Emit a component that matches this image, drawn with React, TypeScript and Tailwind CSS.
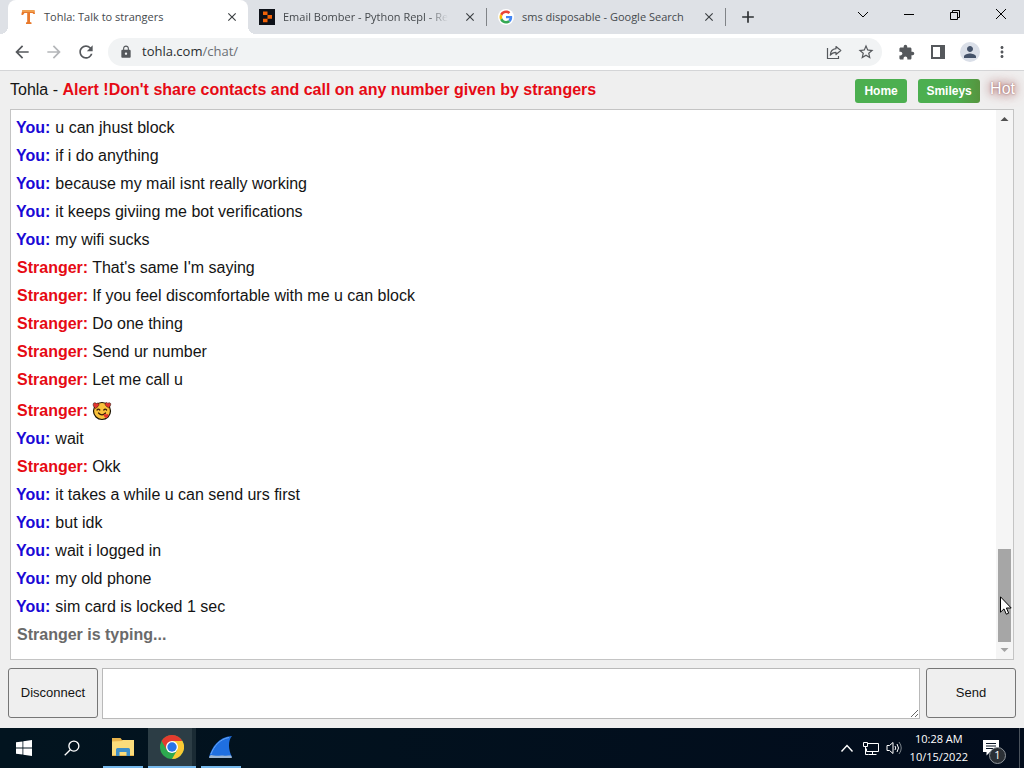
import type { ReactNode } from 'react'
import {
    MdArrowBack,
    MdArrowForward,
    MdRefresh,
    MdLock,
    MdStarBorder,
    MdExtension,
    MdPerson,
    MdMoreVert,
    MdClose,
    MdAdd,
} from 'react-icons/md'

interface Message {
    from: 'You' | 'Stranger'
    text?: string
}

interface TabProps {
    title: string
    icon: ReactNode
    active?: boolean
    faded?: boolean
}

const messages: Message[] = [
    { from: 'You', text: 'u can jhust block' },
    { from: 'You', text: 'if i do anything' },
    { from: 'You', text: 'because my mail isnt really working' },
    { from: 'You', text: 'it keeps giviing me bot verifications' },
    { from: 'You', text: 'my wifi sucks' },
    { from: 'Stranger', text: "That's same I'm saying" },
    { from: 'Stranger', text: 'If you feel discomfortable with me u can block' },
    { from: 'Stranger', text: 'Do one thing' },
    { from: 'Stranger', text: 'Send ur number' },
    { from: 'Stranger', text: 'Let me call u' },
    { from: 'Stranger' },
    { from: 'You', text: 'wait' },
    { from: 'Stranger', text: 'Okk' },
    { from: 'You', text: 'it takes a while u can send urs first' },
    { from: 'You', text: 'but idk' },
    { from: 'You', text: 'wait i logged in' },
    { from: 'You', text: 'my old phone' },
    { from: 'You', text: 'sim card is locked 1 sec' },
]

function TohlaIcon() {
    return (
        <svg width="16" height="16" viewBox="0 0 16 16">
            <path d="M1.500 4.500 2.500 1h11.800L15 5h-1.500L12.500 4H10v9l1.500.6V15H6v-1.400l1.200-.6V4H4.500L3 6H1.500z" fill="#e8792b" />
            <path d="M1.800 3 2.500 1h11.800l.3 2z" fill="#f0a050" />
        </svg>
    )
}

function ReplitIcon() {
    return (
        <svg width="16" height="16" viewBox="0 0 16 16">
            <path d="M0 0h16v16H0z" fill="#0e1118" />
            <path d="M4 2.500h4.500V6H4zM8.500 6H13v3.800H8.500zM4 9.800h4.500v3.500H4z" fill="#f26207" />
        </svg>
    )
}

function GoogleIcon() {
    return (
        <svg width="16" height="16" viewBox="0 0 48 48">
            <circle cx="24" cy="24" r="24" fill="#fff" />
            <g transform="translate(4.500 4.500) scale(.81)">
                <path fill="#EA4335" d="M24 9.500c3.540 0 6.710 1.220 9.210 3.600l6.850-6.850C35.900 2.380 30.470 0 24 0 14.620 0 6.510 5.380 2.560 13.220l7.980 6.190C12.430 13.720 17.740 9.500 24 9.500z" />
                <path fill="#4285F4" d="M46.980 24.550c0-1.570-.15-3.090-.38-4.550H24v9.020h12.940c-.58 2.960-2.260 5.480-4.780 7.180l7.730 6c4.510-4.180 7.090-10.360 7.090-17.650z" />
                <path fill="#FBBC05" d="M10.530 28.590c-.48-1.450-.76-2.990-.76-4.590s.27-3.140.76-4.590l-7.980-6.190C.92 16.460 0 20.120 0 24c0 3.880.92 7.540 2.560 10.780l7.970-6.190z" />
                <path fill="#34A853" d="M24 48c6.480 0 11.930-2.130 15.890-5.810l-7.730-6c-2.150 1.450-4.920 2.300-8.160 2.300-6.260 0-11.570-4.220-13.470-9.910l-7.980 6.190C6.510 42.620 14.620 48 24 48z" />
            </g>
        </svg>
    )
}

function LoveEmoji() {
    return (
        <svg width="20" height="20" viewBox="0 0 20 20" role="img" aria-label="smiling face with hearts">
            <circle cx="10" cy="10" r="8.500" fill="#f9c23c" stroke="#1a1205" strokeWidth="1.200" />
            <path d="M5 9q1.400-1.800 2.800 0M11.800 9q1.400-1.800 2.800 0M6.500 12q3.500 3.600 7 0" fill="none" stroke="#3a1d08" strokeWidth="1.300" strokeLinecap="round" />
            <path d="M3.500 7.500C1.500 6 .5 4 1.500 2.200 2.500 1.200 4 1.700 4.300 2.700 5 1.700 6.800 1.900 7 3.200 7.200 4.700 5.500 6.200 3.500 7.500z" fill="#e3342f" stroke="#1a1205" strokeWidth=".5" />
            <path d="M16.700 6.800c-2.700-1.300-4.200-3-3.500-4.500.8-1.200 2.200-.9 2.700.1.700-1 2.400-.9 2.800.3.300 1.500-.9 3.200-2 4.100z" fill="#e3342f" stroke="#1a1205" strokeWidth=".5" />
            <path d="M14.500 17c-2-.8-3.200-2-2.800-3.300.5-1 1.800-1 2.300-.1.700-.9 2.100-.6 2.400.4.200 1.200-.8 2.300-1.900 3z" fill="#e3342f" />
        </svg>
    )
}

function Tab({ title, icon, active, faded }: TabProps) {
    return (
        <div
            className={
                active
                    ? 'relative flex w-60 items-center rounded-t-lg bg-white pr-2 pl-3'
                    : 'flex w-[238px] items-center pr-2 pl-[11px]'
            }
        >
            {active && (
                <>
                    <span className="absolute bottom-0 -left-2 h-2 w-2 bg-[radial-gradient(circle_at_top_left,transparent_8px,#fff_8px)]" />
                    <span className="absolute -right-2 bottom-0 h-2 w-2 bg-[radial-gradient(circle_at_top_right,transparent_8px,#fff_8px)]" />
                </>
            )}
            {icon}
            <span className="ml-2 flex-1 text-[11px] whitespace-nowrap text-[#45494d]">
                <span className={faded ? 'mask-r-from-88%' : ''}>{title}</span>
            </span>
            <button aria-label="Close tab" className="ml-1 flex w-4 justify-center text-[#3c4043]">
                <MdClose size={14} />
            </button>
        </div>
    )
}

function TabStrip() {
    return (
        <div className="flex h-[34px] bg-[#dee1e6] pl-2">
            <Tab title="Tohla: Talk to strangers" icon={<TohlaIcon />} active />
            <Tab title="Email Bomber - Python Repl - Re" icon={<ReplitIcon />} faded />
            <span className="my-2 w-px bg-[#808387]" />
            <Tab title="sms disposable - Google Search" icon={<GoogleIcon />} />
            <span className="my-2 w-px bg-[#808387]" />
            <button aria-label="New tab" className="ml-3 text-[#2d3033]">
                <MdAdd size={20} />
            </button>
            <div className="ml-auto flex text-black">
                <button aria-label="Search tabs" className="flex w-[46px] justify-center pt-[9px]">
                    <svg width="12" height="12" viewBox="0 0 12 12" fill="none" stroke="currentColor">
                        <path d="m1 3 5 5 5-5" />
                    </svg>
                </button>
                <button aria-label="Minimize" className="flex w-[46px] justify-center pt-[9px]">
                    <svg width="12" height="12" viewBox="0 0 12 12" fill="none" stroke="currentColor">
                        <path d="M1 5.500h10" />
                    </svg>
                </button>
                <button aria-label="Restore" className="flex w-[46px] justify-center pt-[9px]">
                    <svg width="12" height="12" viewBox="0 0 12 12" fill="none" stroke="currentColor">
                        <path d="M1.500 3.500h7v7h-7zM3.500 3.500v-2h7v7h-2" />
                    </svg>
                </button>
                <button aria-label="Close" className="flex w-[46px] justify-center pt-[9px]">
                    <svg width="12" height="12" viewBox="0 0 12 12" fill="none" stroke="currentColor">
                        <path d="m1 0 10 10M11 0 1 10" />
                    </svg>
                </button>
            </div>
        </div>
    )
}

function Toolbar() {
    return (
        <div className="flex h-[37px] items-center border-b border-[#d4d5d7] bg-white pl-3 text-[#55585c]">
            <button aria-label="Back" className="mr-3"><MdArrowBack size={20} /></button>
            <button aria-label="Forward" className="mr-3 text-[#b4b6b9]"><MdArrowForward size={20} /></button>
            <button aria-label="Reload" className="mr-3"><MdRefresh size={20} /></button>
            <div className="flex h-7 flex-1 items-center rounded-full bg-[#f1f3f4] pr-[7px] pl-[11px]">
                <MdLock size={14} />
                <a href="#" className="ml-[9px] flex-1 text-[13px] text-[#6b6f74]">
                    <span className="text-[#2a2d30]">tohla.com</span>/chat/
                </a>
                <button aria-label="Share" className="mr-[15px]">
                    <svg width="16" height="16" viewBox="0 0 16 16" fill="none" stroke="currentColor" strokeWidth="1.200">
                        <path d="M1.500 4v10.500h11V12" />
                        <path d="M10 2.500 14.800 6.500 10 10.500V8.300c-2.500 0-4.300.8-5.700 2.900C4.500 7.500 6.500 5 10 4.700z" strokeLinejoin="round" />
                    </svg>
                </button>
                <button aria-label="Bookmark"><MdStarBorder size={18} /></button>
            </div>
            <div className="flex items-center gap-3 pr-3 pl-3.5">
                <button aria-label="Extensions" className="flex w-5 justify-center"><MdExtension size={17} /></button>
                <button aria-label="Side panel" className="flex w-5 justify-center">
                    <svg width="14" height="14" viewBox="0 0 14 14">
                        <path d="M1 1h12v12H1z" fill="none" stroke="currentColor" strokeWidth="2" />
                        <path d="M9 0h5v14H9z" fill="currentColor" />
                    </svg>
                </button>
                <button aria-label="Profile" className="flex size-5 items-center justify-center rounded-full bg-[#dadfe8] text-[#45536a]">
                    <MdPerson size={18} />
                </button>
                <button aria-label="Menu" className="flex w-5 justify-center"><MdMoreVert size={18} /></button>
            </div>
        </div>
    )
}

function Line({ message }: { message: Message }) {
    const you = message.from === 'You'

    return (
        <li className={message.text ? 'flex leading-7' : 'flex pt-[3px] leading-7'}>
            <b className={you ? 'text-[#1a08d6]' : 'pl-px text-[#e60a14]'}>{message.from}:</b>
            <span className={you ? 'pl-[5px]' : 'flex items-center pl-1'}>{message.text || <LoveEmoji />}</span>
        </li>
    )
}

function Scrollbar() {
    return (
        <div className="relative flex w-[17px] flex-col items-center bg-[#f5f5f5]">
            <svg width="17" height="17" viewBox="0 0 17 17"><path d="m4.500 11 4-4 4 4z" fill="#505050" /></svg>
            <div className="flex-1" />
            <div className="h-[93px] w-[13px] bg-[#a6a6a6]" />
            <svg width="17" height="17" viewBox="0 0 17 17"><path d="m4.500 6 4 4 4-4z" fill="#a3a3a3" /></svg>
            {/* mouse pointer resting on the thumb */}
            <svg className="absolute bottom-11 left-1" width="12" height="19" viewBox="0 0 12 19">
                <path d="M.5.8v15.400l3.500-3.300 2.300 5.300 2.400-1-2.300-5.200h4.800z" fill="#fff" stroke="#000" />
            </svg>
        </div>
    )
}

function Chat() {
    return (
        <main className="flex min-h-0 flex-1 flex-col bg-[#efefef] font-['Liberation_Sans',Arial,sans-serif] text-[#141414]">
            <header className="flex h-[38px] items-center pl-2.5">
                <h1 className="flex-1 text-base">
                    Tohla - <b className="text-[#e60a14]">Alert !Don't share contacts and call on any number given by strangers</b>
                </h1>
                <nav className="flex items-center pt-0.5 text-xs font-bold text-white">
                    <a href="#" className="flex h-6 w-[52px] items-center justify-center rounded-[3px] bg-[#4caf50]">Home</a>
                    <a href="#" className="ml-[11px] flex h-6 w-[62px] items-center justify-center rounded-[3px] bg-linear-to-r from-[#4caf50] from-60% to-[#55953f]">
                        Smileys
                    </a>
                    <a href="#" className="ml-2.5 pr-[9px] pb-1 text-base font-normal text-white [text-shadow:0_0_2px_#9a6060,0_0_8px_#a05050,0_0_14px_#b07070]">
                        Hot
                    </a>
                </nav>
            </header>
            <section className="mx-2.5 flex min-h-0 flex-1 border border-[#c4c4c4] bg-white">
                <ul className="flex-1 overflow-hidden pt-1 pl-[5px] text-base">
                    {messages.map((message, key) => (
                        <Line message={message} key={key} />
                    ))}
                    <li className="pl-px leading-7 font-bold text-[#6a6a6a]">Stranger is typing...</li>
                </ul>
                <Scrollbar />
            </section>
            <form className="flex gap-1 px-2 pt-2 pb-[9px] text-[13px]">
                <button type="button" className="h-[50px] w-[90px] rounded-[3px] border border-[#767676] bg-[#efefef]">
                    Disconnect
                </button>
                <textarea aria-label="Message" className="h-[51px] flex-1 resize border border-[#b9b9b9] bg-white p-1" />
                <button type="button" className="ml-0.5 h-[50px] w-[90px] rounded-[3px] border border-[#767676] bg-[#efefef]">
                    Send
                </button>
            </form>
        </main>
    )
}

function Taskbar() {
    return (
        <footer className="flex h-10 bg-linear-to-r from-[#02141f] to-[#020c1c] text-white">
            <button aria-label="Start" className="flex w-12 items-center justify-center">
                <svg width="16" height="16" viewBox="0 0 16 16" fill="#fff">
                    <path d="M0 2.300 6.500 1.400v6.200H0zM7.300 1.300 16 0v7.600H7.300zM0 8.400h6.500v6.200L0 13.700zM7.300 8.400H16V16l-8.700-1.300z" />
                </svg>
            </button>
            <button aria-label="Search" className="mr-[3px] flex w-12 items-center justify-center">
                <svg width="16" height="16" viewBox="0 0 17 17" fill="none" stroke="#fff" strokeWidth="1.400">
                    <circle cx="10.500" cy="6.500" r="5.300" />
                    <path d="M6.700 10.300.8 16.200" />
                </svg>
            </button>
            <button aria-label="File Explorer" className="flex w-12 flex-col items-center">
                <span className="flex flex-1 items-center">
                    <svg width="22" height="18" viewBox="0 0 22 18">
                        <path d="M0 0h8.500l1.500 2H22v16H0z" fill="#e9b44c" />
                        <path d="M0 3.500 10 3l1-1h11v15H0z" fill="#fbdc7b" />
                        <path d="M4 11.500Q4 10 5.500 10h11q1.500 0 1.500 1.500V18h-3.500v-4h-7v4H4z" fill="#3f8fc9" />
                    </svg>
                </span>
                <span className="h-0.5 w-10 bg-[#76b9ed]" />
            </button>
            <button aria-label="Google Chrome" className="ml-px flex w-12 flex-col items-center bg-linear-to-r from-[#2c3d45] from-92% to-[#1a2b34] to-92%">
                <span className="flex flex-1 items-center">
                    <svg width="24" height="24" viewBox="0 0 24 24">
                        <circle cx="12" cy="12" r="12" fill="#2da94f" />
                        <path d="M12 6h10.400A12 12 0 0 1 12 24l5.200-9z" fill="#fcc934" />
                        <path d="M1.600 6A12 12 0 0 1 22.400 6H12L6.800 15z" fill="#e33b2e" />
                        <circle cx="12" cy="12" r="6" fill="#fff" />
                        <circle cx="12" cy="12" r="4.700" fill="#2874e8" />
                    </svg>
                </span>
                <span className="h-0.5 w-full bg-[#76b9ed]" />
            </button>
            <button aria-label="Wireshark" className="ml-px flex w-12 flex-col items-center">
                <span className="flex flex-1 items-center">
                    <svg width="24" height="24" viewBox="0 0 24 24">
                        <path d="M0 22C3 12 9 2 23 1c-4 4-4 14 0 21z" fill="#1f6fe0" />
                        <path d="M2 19C5 11 11 4 20 2.500" fill="none" stroke="#6aa6f5" strokeWidth="1" />
                        <path d="M0 23c.5-2 1-2.500 2-3 5 1.500 9 0 12 .5s6 0 8 0l1 2.500z" fill="#9db6d2" />
                    </svg>
                </span>
                <span className="h-0.5 w-10 bg-[#76b9ed]" />
            </button>
            <div className="ml-auto flex items-center">
                <button aria-label="Show hidden icons" className="mr-2">
                    <svg width="14" height="9" viewBox="0 0 14 9" fill="none" stroke="#fff" strokeWidth="1.400"><path d="m1.500 7.500 5.500-6 5.500 6" /></svg>
                </button>
                <button aria-label="Network" className="mr-[7px]">
                    <svg width="17" height="16" viewBox="0 0 17 16" fill="none" stroke="#fff">
                        <path d="M5.500 3.500h11v8h-12V8.500M10.500 11.500v3M6.500 14.500h8M1.500 2.500h4v4h-4zM3.500 6.500v8h3" />
                    </svg>
                </button>
                <button aria-label="Volume" className="mr-2">
                    <svg width="16" height="16" viewBox="0 0 16 16" fill="none" stroke="#fff">
                        <path d="M1 5.500h2.500L7 2.500v11l-3.500-3H1zM9 6q1.500 2 0 4M11 4q3 4 0 8" />
                        <path d="M13 2q4.500 6 0 12" stroke="#7d858c" />
                    </svg>
                </button>
                <div className="text-center text-[11px] leading-[18px]">
                    <p>10:28 AM</p>
                    <p>10/15/2022</p>
                </div>
                <button aria-label="Notifications" className="relative ml-3.5">
                    <svg width="18" height="18" viewBox="0 0 18 18">
                        <path d="M1 1h16v12H8l-3.500 3.500V13H1z" fill="#fff" />
                        <path d="M4 4.500h10M4 7h10M4 9.500h7" stroke="#0a1626" />
                    </svg>
                    <span className="absolute top-2 left-[7px] flex size-[17px] items-center justify-center rounded-full border border-[#8f959b] bg-[#2b3036] text-[11px]">
                        1
                    </span>
                </button>
                <span className="mr-1 ml-[19px] h-10 w-px bg-[#4a525c]" />
            </div>
        </footer>
    )
}

export default function App() {
    return (
        <div className="flex h-screen flex-col overflow-hidden font-['Open_Sans','Noto_Sans',sans-serif]">
            <TabStrip />
            <Toolbar />
            <Chat />
            <Taskbar />
        </div>
    )
}
